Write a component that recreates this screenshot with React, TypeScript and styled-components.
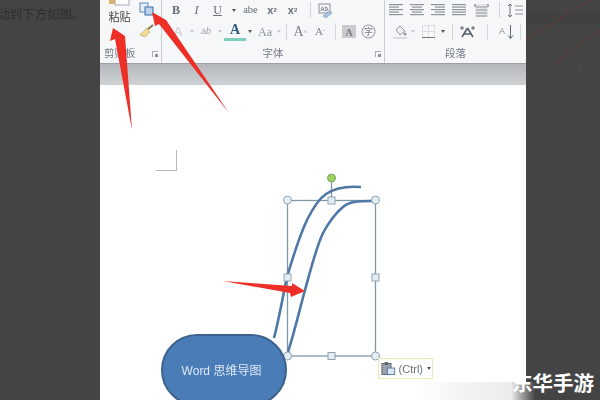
import React from 'react';
import styled, { createGlobalStyle } from 'styled-components';

const Reset = createGlobalStyle`
  html, body { margin: 0; padding: 0; background: #444; }
  body { font-family: "Liberation Sans", "Noto Sans CJK SC", sans-serif; }
`;

const Screen = styled.div`
  position: relative;
  display: flex;
  width: 600px;
  height: 400px;
  overflow: hidden;
  background: #444;
`;

const SidePanel = styled.aside<{ $w: number }>`
  flex: 0 0 ${(p) => p.$w}px;
  background: #444;
  color: #2e2e2e;
  font-size: 12.5px;
  line-height: 16px;
  padding-top: 6px;
  white-space: nowrap;
  overflow: hidden;
  box-sizing: border-box;
  filter: blur(0.4px);
`;

const ClippedLine = styled.div`
  margin-left: -3px;
  font-family: "Noto Sans CJK SC", sans-serif;
`;

const Doc = styled.main`
  flex: 0 0 426px;
  min-width: 0;
  display: flex;
  flex-direction: column;
  background: #fff;
`;

const Ribbon = styled.div`
  flex: 0 0 63px;
  display: flex;
  background: #f6f7f8;
  filter: blur(0.45px);
  color: #5d6670;
  overflow: hidden;
`;

const Group = styled.section<{ $w: number; $last?: boolean }>`
  position: relative;
  flex: 0 0 ${(p) => p.$w}px;
  min-width: 0;
  box-sizing: border-box;
  display: flex;
  flex-direction: column;
  border-right: ${(p) => (p.$last ? 'none' : '1px solid #c9ccd0')};
`;

const Row = styled.div<{ $h: number; $pad: number }>`
  flex: 0 0 ${(p) => p.$h}px;
  display: flex;
  align-items: center;
  padding-left: ${(p) => p.$pad}px;
`;

const Slot = styled.span<{ $w: number; $color?: string; $size?: number; $serif?: boolean; $bold?: boolean; $italic?: boolean }>`
  flex: 0 0 ${(p) => p.$w}px;
  display: flex;
  align-items: center;
  justify-content: center;
  color: ${(p) => p.$color || '#666e78'};
  font-size: ${(p) => p.$size || 11}px;
  font-family: ${(p) => (p.$serif ? '"Liberation Serif", serif' : 'inherit')};
  font-weight: ${(p) => (p.$bold ? 700 : 400)};
  font-style: ${(p) => (p.$italic ? 'italic' : 'normal')};
  line-height: 1;
  white-space: nowrap;
  svg { display: block; }
  sub, sup { font-size: 6px; line-height: 0; }
`;

const Sep = styled.span<{ $w: number }>`
  flex: 0 0 ${(p) => p.$w}px;
  display: flex;
  justify-content: center;
  &::before {
    content: '';
    width: 1px;
    height: 16px;
    background: #d4d7da;
  }
`;

const Caret = styled.span<{ $w?: number; $light?: boolean }>`
  flex: 0 0 ${(p) => p.$w || 10}px;
  display: flex;
  justify-content: center;
  &::before {
    content: '';
    border-left: 2.5px solid transparent;
    border-right: 2.5px solid transparent;
    border-top: 3px solid ${(p) => (p.$light ? '#c4c8cc' : '#555')};
  }
`;

const GroupLabel = styled.div<{ $pad?: number }>`
  flex: 0 0 14px;
  margin-top: 3px;
  padding-left: ${(p) => p.$pad || 0}px;
  text-align: ${(p) => (p.$pad ? 'left' : 'center')};
  font-size: 10.5px;
  line-height: 14px;
  color: #737b85;
  font-family: "Noto Sans CJK SC", sans-serif;
`;

const Launcher = styled.span`
  position: absolute;
  right: 3px;
  bottom: 6px;
  width: 6px;
  height: 6px;
  border-left: 1px solid #a8acb0;
  border-top: 1px solid #a8acb0;
  box-sizing: border-box;
  &::after {
    content: '';
    position: absolute;
    right: 0;
    bottom: 0;
    width: 3px;
    height: 3px;
    background: #8a9098;
  }
`;

const PasteColumn = styled.div`
  display: flex;
  flex: 0 0 43px;
`;

const PasteButton = styled.div`
  flex: 0 0 39px;
  display: flex;
  flex-direction: column;
  align-items: center;
  box-sizing: border-box;
`;

const PasteLabel = styled.span`
  margin-top: 3px;
  font-size: 11px;
  line-height: 14px;
  color: #444;
  font-family: "Noto Sans CJK SC", sans-serif;
`;

const SmallTools = styled.div`
  display: flex;
  flex-direction: column;
  align-items: center;
  gap: 8px;
  padding-top: 2px;
`;

const Band = styled.div`
  flex: 0 0 22px;
  box-sizing: border-box;
  border-top: 1px solid #9da1a5;
  background: linear-gradient(#b4b8bc, #cfd2d5);
`;

const Sheet = styled.div`
  position: relative;
  flex: 1;
  background: #fff;
`;

const CropMark = styled.div`
  position: absolute;
  left: 56px;
  top: 65px;
  width: 21px;
  height: 21px;
  box-sizing: border-box;
  border-right: 1px solid #b9b9b9;
  border-bottom: 1px solid #b9b9b9;
`;

const Drawing = styled.svg`
  position: absolute;
  left: 0;
  top: 0;
`;

const Node = styled.div`
  position: absolute;
  left: 61px;
  top: 249px;
  width: 126px;
  height: 72px;
  box-sizing: border-box;
  border: 2px solid #3b628f;
  border-radius: 36px;
  background: #4a7cb8;
  color: #dde7f2;
  font-size: 12px;
  padding: 0 5px 2px 0;
  display: flex;
  align-items: center;
  justify-content: center;
  filter: blur(0.3px);
`;

const PasteTag = styled.div`
  position: absolute;
  left: 278px;
  top: 273px;
  width: 55px;
  height: 21px;
  box-sizing: border-box;
  border: 1px solid #ecebb8;
  background: #fff;
  display: flex;
  align-items: center;
  gap: 3px;
  padding-left: 2px;
  font-size: 11px;
  color: #6a7078;
  filter: blur(0.25px);
`;

const Annotations = styled.svg`
  position: absolute;
  left: 0;
  top: 0;
  pointer-events: none;
`;

const FadeStrip = styled.div`
  position: absolute;
  left: 420px;
  bottom: 0;
  width: 120px;
  height: 18px;
  background: linear-gradient(
    to right,
    rgba(244, 244, 244, 0),
    rgba(244, 244, 244, 0.9) 30%,
    #ececec 76%,
    #444 96%,
    #444
  );
`;

const Watermark = styled.div`
  position: absolute;
  right: 6px;
  bottom: 6px;
  color: #fff;
  font-family: "Noto Sans CJK SC", sans-serif;
  font-weight: 700;
  font-size: 20.5px;
  line-height: 24px;
  white-space: nowrap;
`;

const Lines = ({ align = 'left' }: { align?: 'left' | 'center' | 'right' | 'full' }) => {
  const rows = [14, 10, 14, 10, 14];
  return (
    <svg width="14" height="12" viewBox="0 0 14 12">
      {rows.map((w, i) => {
        const width = align === 'full' ? 14 : w;
        const x = align === 'center' ? (14 - width) / 2 : align === 'right' ? 14 - width : 0;
        return <rect key={i} x={x} y={i * 2.5} width={width} height="1.2" fill="#8d949b" />;
      })}
    </svg>
  );
};

const App = () => {
  return (
    <>
      <Reset />
      <Screen>
        <SidePanel $w={100}>
          <ClippedLine>动到下方如图。</ClippedLine>
        </SidePanel>

        <Doc>
          <Ribbon>
            <Group $w={62}>
              <PasteColumn>
                <PasteButton>
                  <svg width="22" height="6" viewBox="0 0 22 6">
                    <rect x="0" y="-4" width="9" height="8" fill="#d8b56a" />
                    <rect x="6" y="-6" width="14" height="11" fill="#fff" stroke="#a6abb0" />
                  </svg>
                  <PasteLabel>粘贴</PasteLabel>
                </PasteButton>
                <SmallTools>
                  <svg width="15" height="14" viewBox="0 0 15 14">
                    <rect x="1" y="1" width="8" height="9" fill="#e8eef5" stroke="#5f87b5" />
                    <rect x="6" y="5" width="8" height="8" fill="#b9d0ea" stroke="#3f6ea5" />
                  </svg>
                  <svg width="15" height="14" viewBox="0 0 15 14">
                    <path d="M14 1 L8 6" stroke="#8a7a50" strokeWidth="2" />
                    <path d="M8 4 L11 8 L6 13 L1 11 Z" fill="#f0dc96" stroke="#b59f55" strokeWidth="0.6" />
                  </svg>
                </SmallTools>
              </PasteColumn>
              <GroupLabel $pad={4}>剪贴板</GroupLabel>
              <Launcher />
            </Group>

            <Group $w={223}>
              <Row $h={20} $pad={4}>
                <Slot $w={20} $serif $bold $size={12}>B</Slot>
                <Slot $w={21} $serif $italic $size={12}>I</Slot>
                <Slot $w={21} $serif $size={12} style={{ textDecoration: 'underline' }}>U</Slot>
                <Caret $w={12} />
                <Slot $w={21} $serif $size={10.5}>abe</Slot>
                <Slot $w={22} $bold $size={11}>x<sub>2</sub></Slot>
                <Slot $w={19} $bold $size={11}>x<sup>2</sup></Slot>
                <Sep $w={16} />
                <Slot $w={14}>
                  <svg width="14" height="15" viewBox="0 0 14 15">
                    <rect x="1" y="1" width="11" height="9" fill="#f2f3f4" stroke="#8b939b" />
                    <text x="2.5" y="7.5" fontSize="6" fill="#4d5660">A9</text>
                    <path d="M5 13 L11 8 L14 10 L8 15 Z" fill="#a9c4e2" stroke="#6a8db5" strokeWidth="0.6" />
                  </svg>
                </Slot>
              </Row>
              <Row $h={23} $pad={6}>
                <Slot $w={20} $color="#d3d6d9" $bold $size={13}>A</Slot>
                <Caret $w={8} $light />
                <Slot $w={20} $color="#9ba1a7" $size={9} $italic>ab</Slot>
                <Caret $w={8} $light />
                <Slot $w={22} $color="#2d5f86" $bold $serif $size={14} style={{ borderBottom: '3px solid #7ecfc0', height: 15 }}>A</Slot>
                <Caret $w={8} />
                <Slot $w={22} $color="#8d949b" $serif $size={12}>Aa</Slot>
                <Caret $w={6} $light />
                <Sep $w={8} />
                <Slot $w={20} $color="#7d848b" $serif $size={14}>A<sup>^</sup></Slot>
                <Slot $w={20} $color="#7d848b" $serif $size={11}>A<sup>ˇ</sup></Slot>
                <Sep $w={10} />
                <Slot $w={18}>
                  <svg width="14" height="13" viewBox="0 0 14 13">
                    <rect width="14" height="13" fill="#c9cbce" />
                    <text x="3" y="11" fontSize="11" fontWeight="700" fill="#7a7f85" fontFamily="Liberation Serif">A</text>
                  </svg>
                </Slot>
                <Slot $w={20}>
                  <svg width="15" height="15" viewBox="0 0 15 15">
                    <circle cx="7.5" cy="7.5" r="6.5" fill="none" stroke="#8d949b" />
                    <text x="3" y="11" fontSize="9" fill="#7a8087" fontFamily="Noto Sans CJK SC">字</text>
                  </svg>
                </Slot>
              </Row>
              <GroupLabel>字体</GroupLabel>
              <Launcher />
            </Group>

            <Group $w={141} $last>
              <Row $h={20} $pad={1}>
                <Slot $w={20}><Lines /></Slot>
                <Slot $w={21}><Lines align="center" /></Slot>
                <Slot $w={21}><Lines align="right" /></Slot>
                <Slot $w={21}><Lines align="full" /></Slot>
                <Slot $w={24}>
                  <svg width="15" height="15" viewBox="0 0 15 15">
                    <rect x="1" y="1" width="13" height="13" fill="#e4e6e8" />
                    <path d="M2 4h11M2 7h11M2 10h11M2 13h11" stroke="#8d949b" />
                    <path d="M1 1v3M14 1v3" stroke="#666" />
                  </svg>
                </Slot>
                <Sep $w={12} />
                <Slot $w={21}>
                  <svg width="17" height="15" viewBox="0 0 17 15">
                    <path d="M3 1v13M1 3l2-2 2 2M1 12l2 2 2-2" fill="none" stroke="#6a7078" />
                    <path d="M8 3h8M8 7h8M8 11h8" stroke="#8d949b" />
                  </svg>
                </Slot>
              </Row>
              <Row $h={23} $pad={6}>
                <Slot $w={18}>
                  <svg width="15" height="15" viewBox="0 0 15 15">
                    <path d="M3 6 L7 2 L12 7 L7 11 Z" fill="#eef0f2" stroke="#8d949b" />
                    <circle cx="12" cy="10" r="1.5" fill="#8d949b" />
                    <rect x="0" y="13" width="14" height="2" fill="#d8dadc" />
                  </svg>
                </Slot>
                <Caret $w={8} $light />
                <Slot $w={22}>
                  <svg width="13" height="13" viewBox="0 0 13 13">
                    <path d="M.5.5h12v12H.5zM6.5.5v12M.5 6.5h12" fill="none" stroke="#c3c7cb" strokeDasharray="1 1" />
                    <path d="M0 12.5h13" stroke="#777" />
                  </svg>
                </Slot>
                <Caret $w={8} />
                <Sep $w={10} />
                <Slot $w={20}>
                  <svg width="17" height="13" viewBox="0 0 17 13">
                    <path d="M8.5 3 L3 12 M8.5 3 L14 12 M5 9h7" fill="none" stroke="#59616a" strokeWidth="1.6" />
                    <path d="M1 3h4M3 1v4M12 3h4M14 1v4" stroke="#59616a" />
                  </svg>
                </Slot>
                <Sep $w={21} />
                <Slot $w={8} $size={9} $color="#8d949b">A</Slot>
                <Slot $w={8}>
                  <svg width="7" height="14" viewBox="0 0 7 14">
                    <path d="M3.5 0v13M1 10.5l2.5 3 2.5-3" fill="none" stroke="#5b6670" />
                  </svg>
                </Slot>
                <Sep $w={12} />
              </Row>
              <GroupLabel>段落</GroupLabel>
            </Group>
          </Ribbon>

          <Band />

          <Sheet>
            <CropMark />
            <Drawing width="426" height="315" viewBox="100 85 426 315">
              <g fill="none" stroke="#7f98a8" strokeWidth="1.3">
                <rect x="287.5" y="200.5" width="88" height="155.5" />
                <path d="M331.5 178v22" />
              </g>
              <g fill="none" stroke="#4f78a6" strokeWidth="2.6">
                <path d="M274 338 C280 315 283 295 287 277 C295 250 300 235 307 220 C314 206 320 198 326 194 C335 188 348 186 361 187" />
                <path d="M288 352 C295 330 300 308 305 290 C312 265 316 248 323 233 C330 220 337 212 343 207 C350 201 360 201 372 201" />
              </g>
              <circle cx="331.5" cy="178" r="4" fill="#9bcf5e" stroke="#7fa86c" />
              <g fill="#e4edf3" stroke="#8fa5b3">
                <circle cx="287.5" cy="200" r="4" />
                <circle cx="375.5" cy="200" r="4" />
                <circle cx="287.5" cy="356" r="4" />
                <circle cx="375.5" cy="356" r="4" />
                <rect x="328" y="197" width="7" height="7" />
                <rect x="284" y="274" width="7" height="7" />
                <rect x="372" y="274" width="7" height="7" />
                <rect x="328" y="352.5" width="7" height="7" />
              </g>
            </Drawing>
            <Node>Word 思维导图</Node>
            <PasteTag>
              <svg width="16" height="15" viewBox="0 0 16 15">
                <rect x="1" y="2" width="10" height="12" fill="#9aa3ab" stroke="#59616a" />
                <rect x="4" y="0.5" width="4" height="3" fill="#59616a" />
                <rect x="7" y="7" width="8" height="7" fill="#dbe8f3" stroke="#4f78a6" />
              </svg>
              <span>(Ctrl)</span>
              <Caret $w={6} />
            </PasteTag>
          </Sheet>
        </Doc>

        <SidePanel $w={74} />

        <Annotations width="600" height="400" viewBox="0 0 600 400">
          <g fill="#ee2f28">
            <polygon points="132,130 125,36 113,28 110,41 115,39" />
            <polygon points="229,113 166,20 152,12 155,26 159,24" />
            <polygon points="223,281 292,286 292,283 305,291 291,297 290,293" />
          </g>
          <path d="M526 13h74v12h-74z" fill="#414141" />
          <g fill="none" stroke="#5a3c3c" strokeWidth="1.4">
            <path d="M526 40 L590 0" />
            <path d="M555 63 L600 30" />
          </g>
          <path d="M580 60v12h11" fill="none" stroke="#4c4c4c" />
        </Annotations>

        <FadeStrip />
        <Watermark>东华手游</Watermark>
      </Screen>
    </>
  );
};

export default App;
